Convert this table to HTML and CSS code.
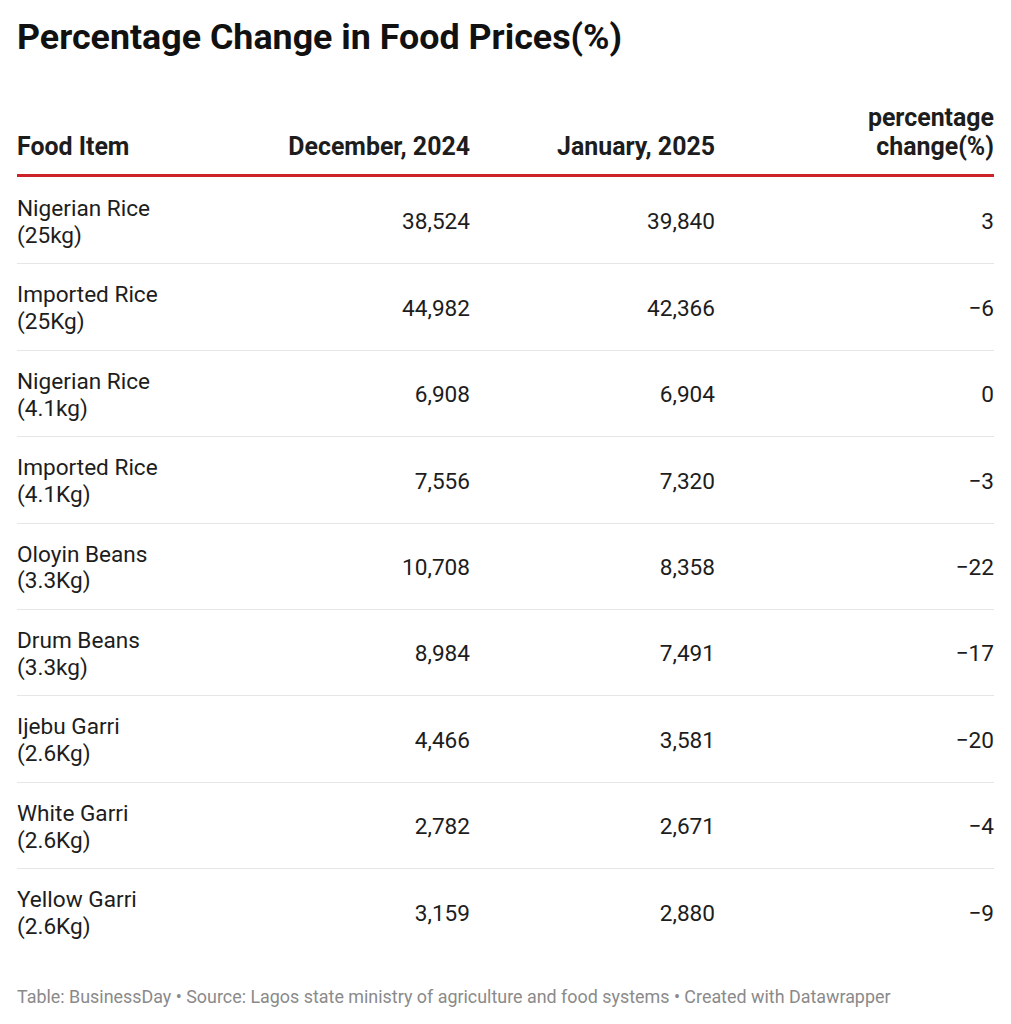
FILE: index.html
```html
<!DOCTYPE html>
<html>
<head>
<meta charset="utf-8">
<link rel="stylesheet" href="styles.css">
</head>
<body>
<div class="chart">
  <h1 class="title">Percentage Change in Food Prices(%)</h1>
  <table class="tbl">
    <colgroup>
      <col class="c1"><col class="c2"><col class="c3"><col class="c4">
    </colgroup>
    <thead>
      <tr>
        <th class="left">Food Item</th>
        <th>December, 2024</th>
        <th>January, 2025</th>
        <th>percentage<br>change(%)</th>
      </tr>
    </thead>
    <tbody>
      <tr><td class="left">Nigerian Rice<br>(25kg)</td><td>38,524</td><td>39,840</td><td>3</td></tr>
      <tr><td class="left">Imported Rice<br>(25Kg)</td><td>44,982</td><td>42,366</td><td>−6</td></tr>
      <tr><td class="left">Nigerian Rice<br>(4.1kg)</td><td>6,908</td><td>6,904</td><td>0</td></tr>
      <tr><td class="left">Imported Rice<br>(4.1Kg)</td><td>7,556</td><td>7,320</td><td>−3</td></tr>
      <tr><td class="left">Oloyin Beans<br>(3.3Kg)</td><td>10,708</td><td>8,358</td><td>−22</td></tr>
      <tr><td class="left">Drum Beans<br>(3.3kg)</td><td>8,984</td><td>7,491</td><td>−17</td></tr>
      <tr><td class="left">Ijebu Garri<br>(2.6Kg)</td><td>4,466</td><td>3,581</td><td>−20</td></tr>
      <tr><td class="left">White Garri<br>(2.6Kg)</td><td>2,782</td><td>2,671</td><td>−4</td></tr>
      <tr class="last"><td class="left">Yellow Garri<br>(2.6Kg)</td><td>3,159</td><td>2,880</td><td>−9</td></tr>
    </tbody>
  </table>
  <p class="footer">Table: BusinessDay • Source: Lagos state ministry of agriculture and food systems • Created with Datawrapper</p>
</div>
</body>
</html>
```

FILE: styles.css
```css
html, body {
  margin: 0;
  padding: 0;
  background: #ffffff;
}
body {
  font-family: Roboto, "Liberation Sans", sans-serif;
  color: #1d1d1d;
}
.chart {
  padding: 14px 17px 0 17px;
}
.title {
  margin: 0;
  font-size: 35.8px;
  font-weight: 700;
  line-height: 46px;
  color: #111;
}
.tbl {
  width: 977px;
  margin-top: 43px;
  border-collapse: collapse;
  table-layout: fixed;
}
.c1 { width: 200px; }
.c2 { width: 253px; }
.c3 { width: 245px; }
.c4 { width: 279px; }
th {
  font-size: 24.9px;
  font-weight: 700;
  line-height: 29px;
  text-align: right;
  vertical-align: bottom;
  padding: 0 0 13px 0;
  border-bottom: 3px solid #cc2229;
  color: #1d1d1d;
}
td {
  font-size: 22.6px;
  font-weight: 400;
  line-height: 26.7px;
  text-align: right;
  vertical-align: middle;
  padding: 18px 0 14px 0;
  border-bottom: 1px solid #e6e6e6;
}
th.left, td.left {
  text-align: left;
}
tbody tr:first-child td {
  padding-top: 19px;
}
tr.last td {
  border-bottom: none;
}
.footer {
  margin: 31px 0 0 0;
  font-size: 17.9px;
  line-height: 22px;
  color: #8a8a8a;
}
```
